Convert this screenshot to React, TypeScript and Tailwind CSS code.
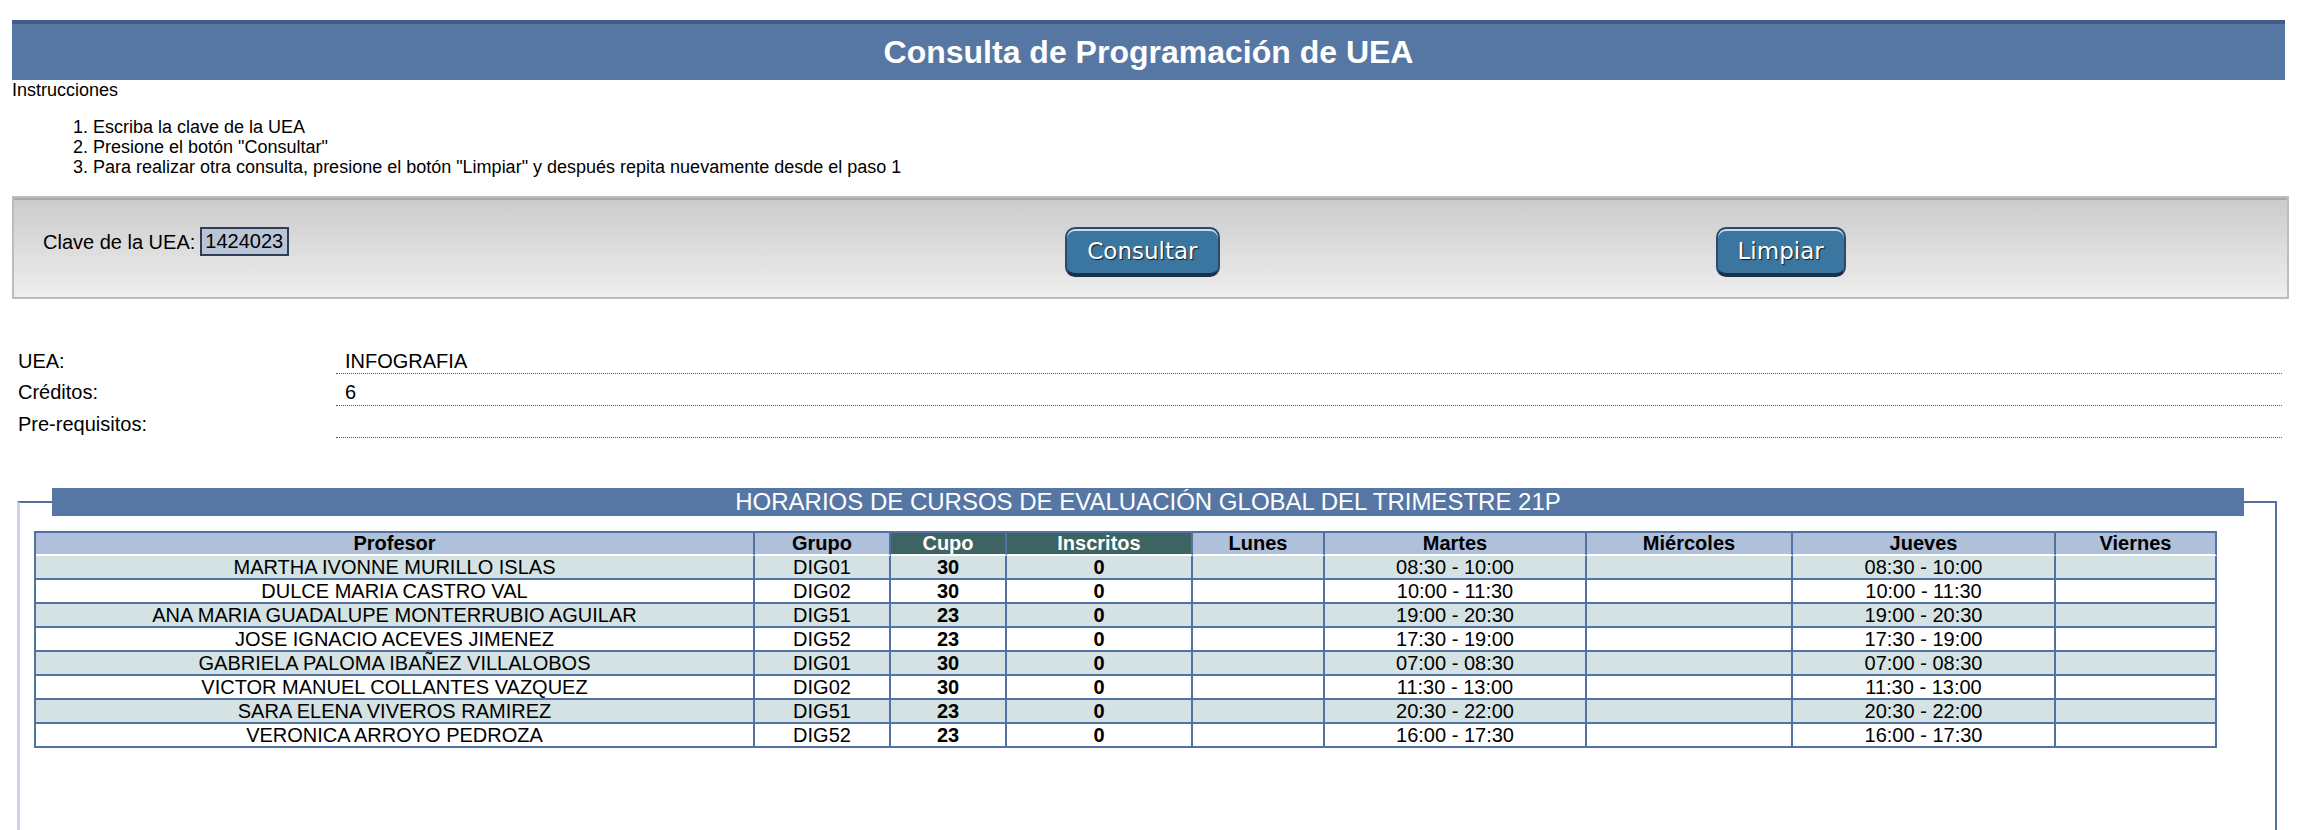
import React from "react";

const headers = [
  "Profesor",
  "Grupo",
  "Cupo",
  "Inscritos",
  "Lunes",
  "Martes",
  "Miércoles",
  "Jueves",
  "Viernes",
];

const colWidths = [719, 136, 116, 186, 132, 262, 206, 263, 161];

const rows: string[][] = [
  ["MARTHA IVONNE MURILLO ISLAS", "DIG01", "30", "0", "", "08:30 - 10:00", "", "08:30 - 10:00", ""],
  ["DULCE MARIA CASTRO VAL", "DIG02", "30", "0", "", "10:00 - 11:30", "", "10:00 - 11:30", ""],
  ["ANA MARIA GUADALUPE MONTERRUBIO AGUILAR", "DIG51", "23", "0", "", "19:00 - 20:30", "", "19:00 - 20:30", ""],
  ["JOSE IGNACIO ACEVES JIMENEZ", "DIG52", "23", "0", "", "17:30 - 19:00", "", "17:30 - 19:00", ""],
  ["GABRIELA PALOMA IBAÑEZ VILLALOBOS", "DIG01", "30", "0", "", "07:00 - 08:30", "", "07:00 - 08:30", ""],
  ["VICTOR MANUEL COLLANTES VAZQUEZ", "DIG02", "30", "0", "", "11:30 - 13:00", "", "11:30 - 13:00", ""],
  ["SARA ELENA VIVEROS RAMIREZ", "DIG51", "23", "0", "", "20:30 - 22:00", "", "20:30 - 22:00", ""],
  ["VERONICA ARROYO PEDROZA", "DIG52", "23", "0", "", "16:00 - 17:30", "", "16:00 - 17:30", ""],
];

function BlueButton({ label }: { label: string }) {
  return (
    <button
      type="button"
      className="h-[50px] px-[20px] rounded-[10px] bg-[#3b76a0] border-2 border-[#2b4a6c] border-b-[4px] border-b-[#1b3049] text-white text-[23px] leading-none font-['DejaVu_Sans',sans-serif] [text-shadow:1px_1px_1px_#0f1d2b] shadow-[inset_0_2px_0_rgba(255,255,255,0.75)]"
    >
      {label}
    </button>
  );
}

export default function App() {
  return (
    <div className="min-h-[830px] bg-white pt-[20px] pb-[20px] text-black font-['Liberation_Sans',Arial,Helvetica,sans-serif]">
      {/* Title bar */}
      <div className="ml-[12px] w-[2273px] h-[60px] border-t-4 border-[#3f5d88] bg-[#5677a4] flex items-center justify-center">
        <h1 className="text-[32px] font-bold text-white leading-none">
          Consulta de Programación de UEA
        </h1>
      </div>

      {/* Instructions */}
      <div className="ml-[12px] text-[18px] leading-[20px]">
        <div>Instrucciones</div>
        <ol className="mt-[17px] ml-[61px] list-none">
          <li>1. Escriba la clave de la UEA</li>
          <li>2. Presione el botón "Consultar"</li>
          <li>3. Para realizar otra consulta, presione el botón "Limpiar" y después repita nuevamente desde el paso 1</li>
        </ol>
      </div>

      {/* Search panel */}
      <div className="mt-[19px] ml-[12px] w-[2277px] h-[103px] border-2 border-[#bdbdbd] bg-linear-to-b from-[#cbcbcb] to-[#eeeeee] shadow-[inset_0_2px_0_#a9a9a9] flex items-start pt-[29px]">
        <div className="ml-[29px] flex items-center gap-[5px] h-[29px] text-[20px]">
          <span>Clave de la UEA:</span>
          <div className="w-[89px] h-[29px] border-2 border-[#2f3e58] bg-[#b9c4d6] pl-[3px] leading-[25px]">
            1424023
          </div>
        </div>
        <div className="ml-[776px]">
          <BlueButton label="Consultar" />
        </div>
        <div className="ml-[496px]">
          <BlueButton label="Limpiar" />
        </div>
      </div>

      {/* UEA info */}
      <div className="mt-[47px] text-[20px]">
        <div className="flex h-[28px]">
          <div className="w-[336px] pl-[18px] pt-[3px] leading-[24px]">UEA:</div>
          <div className="w-[1946px] border-b border-dotted border-[#555555] pl-[9px] pt-[3px] leading-[24px]">
            INFOGRAFIA
          </div>
        </div>
        <div className="flex h-[32px]">
          <div className="w-[336px] pl-[18px] pt-[6px] leading-[24px]">Créditos:</div>
          <div className="w-[1946px] border-b border-dotted border-[#555555] pl-[9px] pt-[6px] leading-[24px]">
            6
          </div>
        </div>
        <div className="flex h-[32px]">
          <div className="w-[336px] pl-[18px] pt-[6px] leading-[24px]">Pre-requisitos:</div>
          <div className="w-[1946px] border-b border-dotted border-[#555555] pl-[9px] pt-[6px] leading-[24px]"></div>
        </div>
      </div>

      {/* Schedules */}
      <section className="mt-[50px] ml-[17px] w-[2260px]">
        <div className="flex h-[28px]">
          <div className="w-[35px] self-end h-[15px] border-t-2 border-l-[3px] border-t-[#5272a3] border-l-[#c8d4e5]" />
          <h2 className="w-[2192px] h-[28px] bg-[#5677a4] text-white text-[24px] leading-[28px] text-center font-normal">
            HORARIOS DE CURSOS DE EVALUACIÓN GLOBAL DEL TRIMESTRE 21P
          </h2>
          <div className="flex-1 self-end h-[15px] border-t-2 border-r-2 border-[#5272a3]" />
        </div>
        <div className="border-l-[3px] border-l-[#c8d4e5] border-r-2 border-r-[#5272a3] pt-[15px] pl-[14px] pb-[120px]">
          <table className="table-fixed w-[2183px] border-separate border-spacing-0 border-l-2 border-t-2 border-[#5272a3] text-[20px]">
            <colgroup>
              {colWidths.map((w, i) => (
                <col key={i} style={{ width: w }} />
              ))}
            </colgroup>
            <thead>
              <tr>
                {headers.map((h, i) => {
                  const dark = i === 2 || i === 3;
                  return (
                    <th
                      key={h}
                      className={
                        dark
                          ? "p-0 leading-[21px] font-bold text-center text-white bg-[#3d6363] border-r-2 border-r-[#5272a3] border-b-2 border-b-white"
                          : "p-0 leading-[21px] font-bold text-center text-black bg-[#aec0da] border-r-2 border-r-[#5272a3] border-b-2 border-b-white"
                      }
                    >
                      {h}
                    </th>
                  );
                })}
              </tr>
            </thead>
            <tbody>
              {rows.map((r, ri) => (
                <tr key={ri} className={ri % 2 === 0 ? "bg-[#d4e2e3]" : "bg-white"}>
                  {r.map((c, ci) => (
                    <td
                      key={ci}
                      className={
                        ci === 2 || ci === 3
                          ? "p-0 leading-[22px] text-center font-bold border-r-2 border-b-2 border-[#5272a3] whitespace-nowrap"
                          : "p-0 leading-[22px] text-center border-r-2 border-b-2 border-[#5272a3] whitespace-nowrap"
                      }
                    >
                      {c}
                    </td>
                  ))}
                </tr>
              ))}
            </tbody>
          </table>
        </div>
      </section>
    </div>
  );
}
